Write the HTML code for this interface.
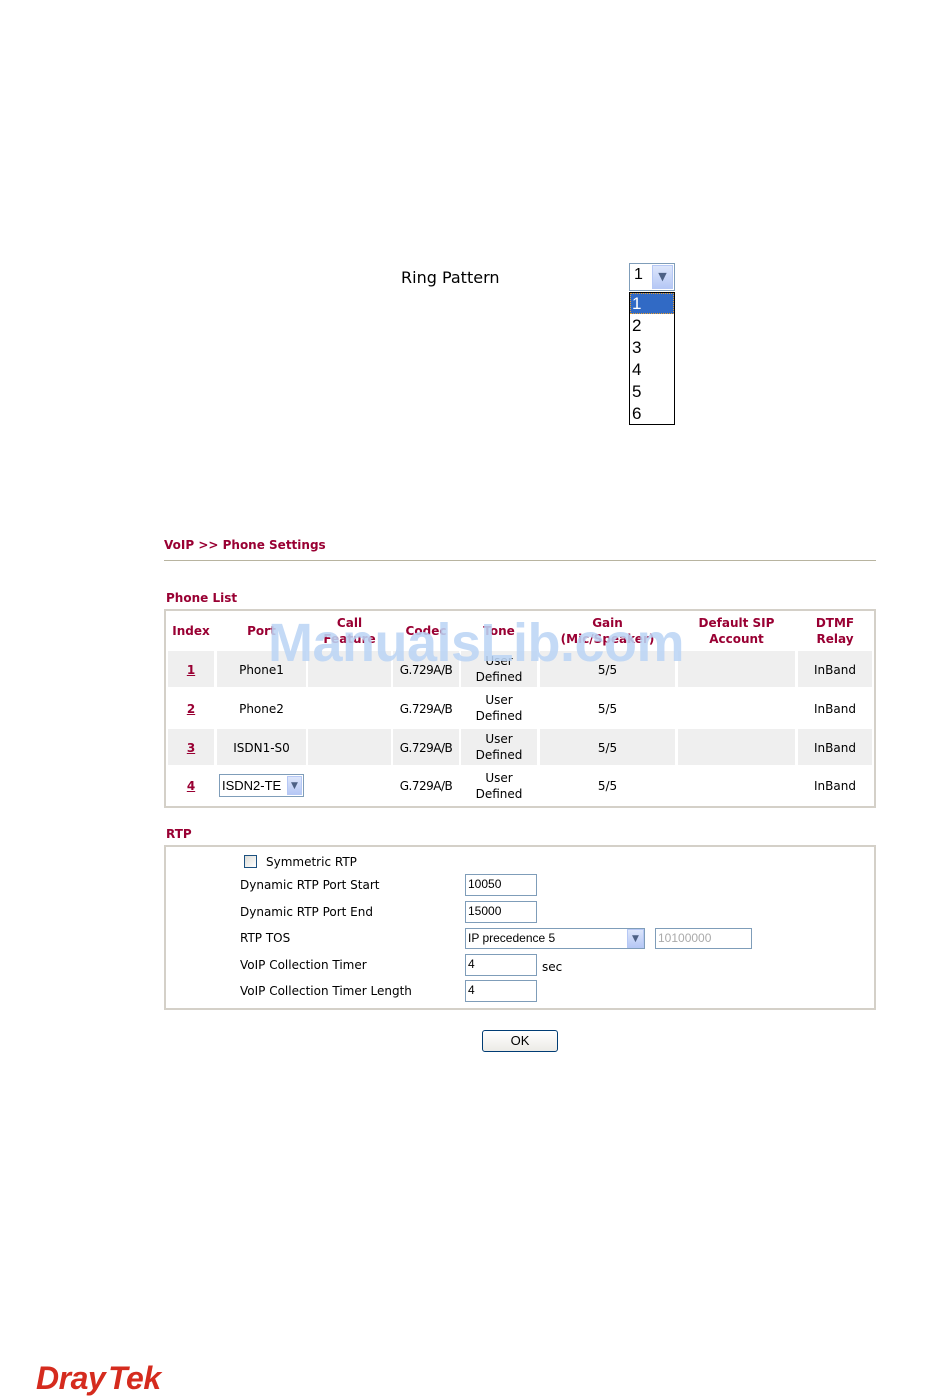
<!DOCTYPE html>
<html><head><meta charset="utf-8"><style>
body{margin:0;width:950px;height:1398px;background:#fff;position:relative;font-family:"DejaVu Sans","Liberation Sans",sans-serif;font-size:12px;color:#000;overflow:hidden}
.a{position:absolute}
.h{color:#990033;font-weight:bold;font-size:12px}
.g{position:absolute;background:#efefef}
.c{position:absolute;text-align:center;line-height:16px}
.in{position:absolute;border:1px solid #7f9db9;background:#fff;height:20px;box-sizing:border-box;font-family:"Liberation Sans",sans-serif;font-size:12px;line-height:18px;padding-left:2px}
.arr{position:absolute;background:linear-gradient(#dde6fb,#b6c8f5);border:1px solid #b6c8f5;box-sizing:border-box;color:#4d6185;font-size:9px;text-align:center}
</style></head><body>
<div class="a" style="left:401px;top:268px;font-size:16px">Ring Pattern</div>
<div class="a" style="left:629px;top:263px;width:46px;height:28px;border:1px solid #7f9db9;box-sizing:border-box"></div>
<div class="a" style="left:634px;top:266px;font-size:16px;font-family:'Liberation Sans',sans-serif">1</div>
<div class="arr" style="left:652px;top:265px;width:21px;height:24px;line-height:22px;font-size:11px">&#9660;</div>
<div class="a" style="left:629px;top:292px;width:46px;height:133px;border:1px solid #000;box-sizing:border-box"></div>
<div class="a" style="left:630px;top:293px;width:44px;height:21px;background:#316ac5;outline:1px dotted #e8a030;outline-offset:-1px"></div>
<div class="a" style="left:632px;top:293px;font-size:17px;line-height:22px;font-family:'Liberation Sans',sans-serif">
<div style="color:#fff">1</div><div>2</div><div>3</div><div>4</div><div>5</div><div>6</div></div>

<div class="a h" style="left:164px;top:538px">VoIP &gt;&gt; Phone Settings</div>
<div class="a" style="left:164px;top:560px;width:712px;height:1px;background:#b8b4a0"></div>
<div class="a h" style="left:166px;top:591px">Phone List</div>
<div class="a" style="left:164px;top:609px;width:712px;height:199px;border:2px solid #d4d0c8;box-sizing:border-box"></div>

<div class="g" style="left:168px;top:651px;width:46px;height:36px"></div>
<div class="g" style="left:217px;top:651px;width:89px;height:36px"></div>
<div class="g" style="left:308px;top:651px;width:83px;height:36px"></div>
<div class="g" style="left:393px;top:651px;width:66px;height:36px"></div>
<div class="g" style="left:461px;top:651px;width:76px;height:36px"></div>
<div class="g" style="left:540px;top:651px;width:135px;height:36px"></div>
<div class="g" style="left:678px;top:651px;width:117px;height:36px"></div>
<div class="g" style="left:798px;top:651px;width:74px;height:36px"></div>
<div class="g" style="left:168px;top:729px;width:46px;height:36px"></div>
<div class="g" style="left:217px;top:729px;width:89px;height:36px"></div>
<div class="g" style="left:308px;top:729px;width:83px;height:36px"></div>
<div class="g" style="left:393px;top:729px;width:66px;height:36px"></div>
<div class="g" style="left:461px;top:729px;width:76px;height:36px"></div>
<div class="g" style="left:540px;top:729px;width:135px;height:36px"></div>
<div class="g" style="left:678px;top:729px;width:117px;height:36px"></div>
<div class="g" style="left:798px;top:729px;width:74px;height:36px"></div>

<div class="c h" style="left:166px;top:623px;width:50px">Index</div>
<div class="c h" style="left:217px;top:623px;width:89px">Port</div>
<div class="c h" style="left:308px;top:615px;width:83px">Call<br>Feature</div>
<div class="c h" style="left:393px;top:623px;width:66px">Codec</div>
<div class="c h" style="left:461px;top:623px;width:76px">Tone</div>
<div class="c h" style="left:540px;top:615px;width:135px">Gain<br>(Mic/Speaker)</div>
<div class="c h" style="left:678px;top:615px;width:117px">Default SIP<br>Account</div>
<div class="c h" style="left:798px;top:615px;width:74px">DTMF<br>Relay</div>

<div class="c h" style="left:168px;top:662px;width:46px;text-decoration:underline">1</div>
<div class="c" style="left:217px;top:662px;width:89px">Phone1</div>
<div class="c" style="left:391px;top:662px;width:70px;font-size:12px;letter-spacing:-0.5px">G.729A/B</div>
<div class="c" style="left:461px;top:653px;width:76px">User<br>Defined</div>
<div class="c" style="left:540px;top:662px;width:135px">5/5</div>
<div class="c" style="left:798px;top:662px;width:74px">InBand</div>

<div class="c h" style="left:168px;top:701px;width:46px;text-decoration:underline">2</div>
<div class="c" style="left:217px;top:701px;width:89px">Phone2</div>
<div class="c" style="left:391px;top:701px;width:70px;font-size:12px;letter-spacing:-0.5px">G.729A/B</div>
<div class="c" style="left:461px;top:692px;width:76px">User<br>Defined</div>
<div class="c" style="left:540px;top:701px;width:135px">5/5</div>
<div class="c" style="left:798px;top:701px;width:74px">InBand</div>

<div class="c h" style="left:168px;top:740px;width:46px;text-decoration:underline">3</div>
<div class="c" style="left:217px;top:740px;width:89px">ISDN1-S0</div>
<div class="c" style="left:391px;top:740px;width:70px;font-size:12px;letter-spacing:-0.5px">G.729A/B</div>
<div class="c" style="left:461px;top:731px;width:76px">User<br>Defined</div>
<div class="c" style="left:540px;top:740px;width:135px">5/5</div>
<div class="c" style="left:798px;top:740px;width:74px">InBand</div>

<div class="c h" style="left:168px;top:778px;width:46px;text-decoration:underline">4</div>
<div class="in" style="left:219px;top:774px;width:85px;height:23px;line-height:21px;font-size:13px">ISDN2-TE</div>
<div class="arr" style="left:287px;top:776px;width:15px;height:19px;line-height:18px">&#9660;</div>
<div class="c" style="left:391px;top:778px;width:70px;font-size:12px;letter-spacing:-0.5px">G.729A/B</div>
<div class="c" style="left:461px;top:770px;width:76px">User<br>Defined</div>
<div class="c" style="left:540px;top:778px;width:135px">5/5</div>
<div class="c" style="left:798px;top:778px;width:74px">InBand</div>

<div class="a" style="left:268px;top:612px;font-family:'Liberation Sans',sans-serif;font-weight:bold;font-size:54px;color:#bcd5f5;opacity:0.88;letter-spacing:-0.5px">ManualsLib.com</div>

<div class="a h" style="left:166px;top:827px">RTP</div>
<div class="a" style="left:164px;top:845px;width:712px;height:165px;border:2px solid #d4d0c8;box-sizing:border-box"></div>
<div class="a" style="left:244px;top:855px;width:13px;height:13px;border:1px solid #1c5180;box-sizing:border-box;background:linear-gradient(135deg,#dcdcd7,#fff)"></div>
<div class="a" style="left:266px;top:855px">Symmetric RTP</div>
<div class="a" style="left:240px;top:878px">Dynamic RTP Port Start</div>
<div class="a" style="left:240px;top:905px">Dynamic RTP Port End</div>
<div class="a" style="left:240px;top:931px">RTP TOS</div>
<div class="a" style="left:240px;top:958px">VoIP Collection Timer</div>
<div class="a" style="left:240px;top:984px">VoIP Collection Timer Length</div>
<div class="in" style="left:465px;top:874px;width:72px;height:22px">10050</div>
<div class="in" style="left:465px;top:901px;width:72px;height:22px">15000</div>
<div class="in" style="left:465px;top:928px;width:180px;height:21px">IP precedence 5</div>
<div class="arr" style="left:627px;top:929px;width:17px;height:19px;line-height:18px">&#9660;</div>
<div class="in" style="left:655px;top:928px;width:97px;height:21px;color:#aaa">10100000</div>
<div class="in" style="left:465px;top:954px;width:72px;height:22px">4</div>
<div class="a" style="left:542px;top:960px">sec</div>
<div class="in" style="left:465px;top:980px;width:72px;height:22px">4</div>
<div class="a" style="left:482px;top:1030px;width:76px;height:22px;border:1px solid #003c74;border-radius:3px;box-sizing:border-box;background:linear-gradient(#fff,#ecebe6);text-align:center;line-height:19px;font-family:'Liberation Sans',sans-serif;font-size:13px">OK</div>

<div class="a" style="left:36px;top:1360px;font-family:'Liberation Sans',sans-serif;font-weight:bold;font-style:italic;font-size:32px;color:#d52b1e;letter-spacing:-0.5px">Dray<span style="margin-left:3px">Tek</span></div>
</body></html>
